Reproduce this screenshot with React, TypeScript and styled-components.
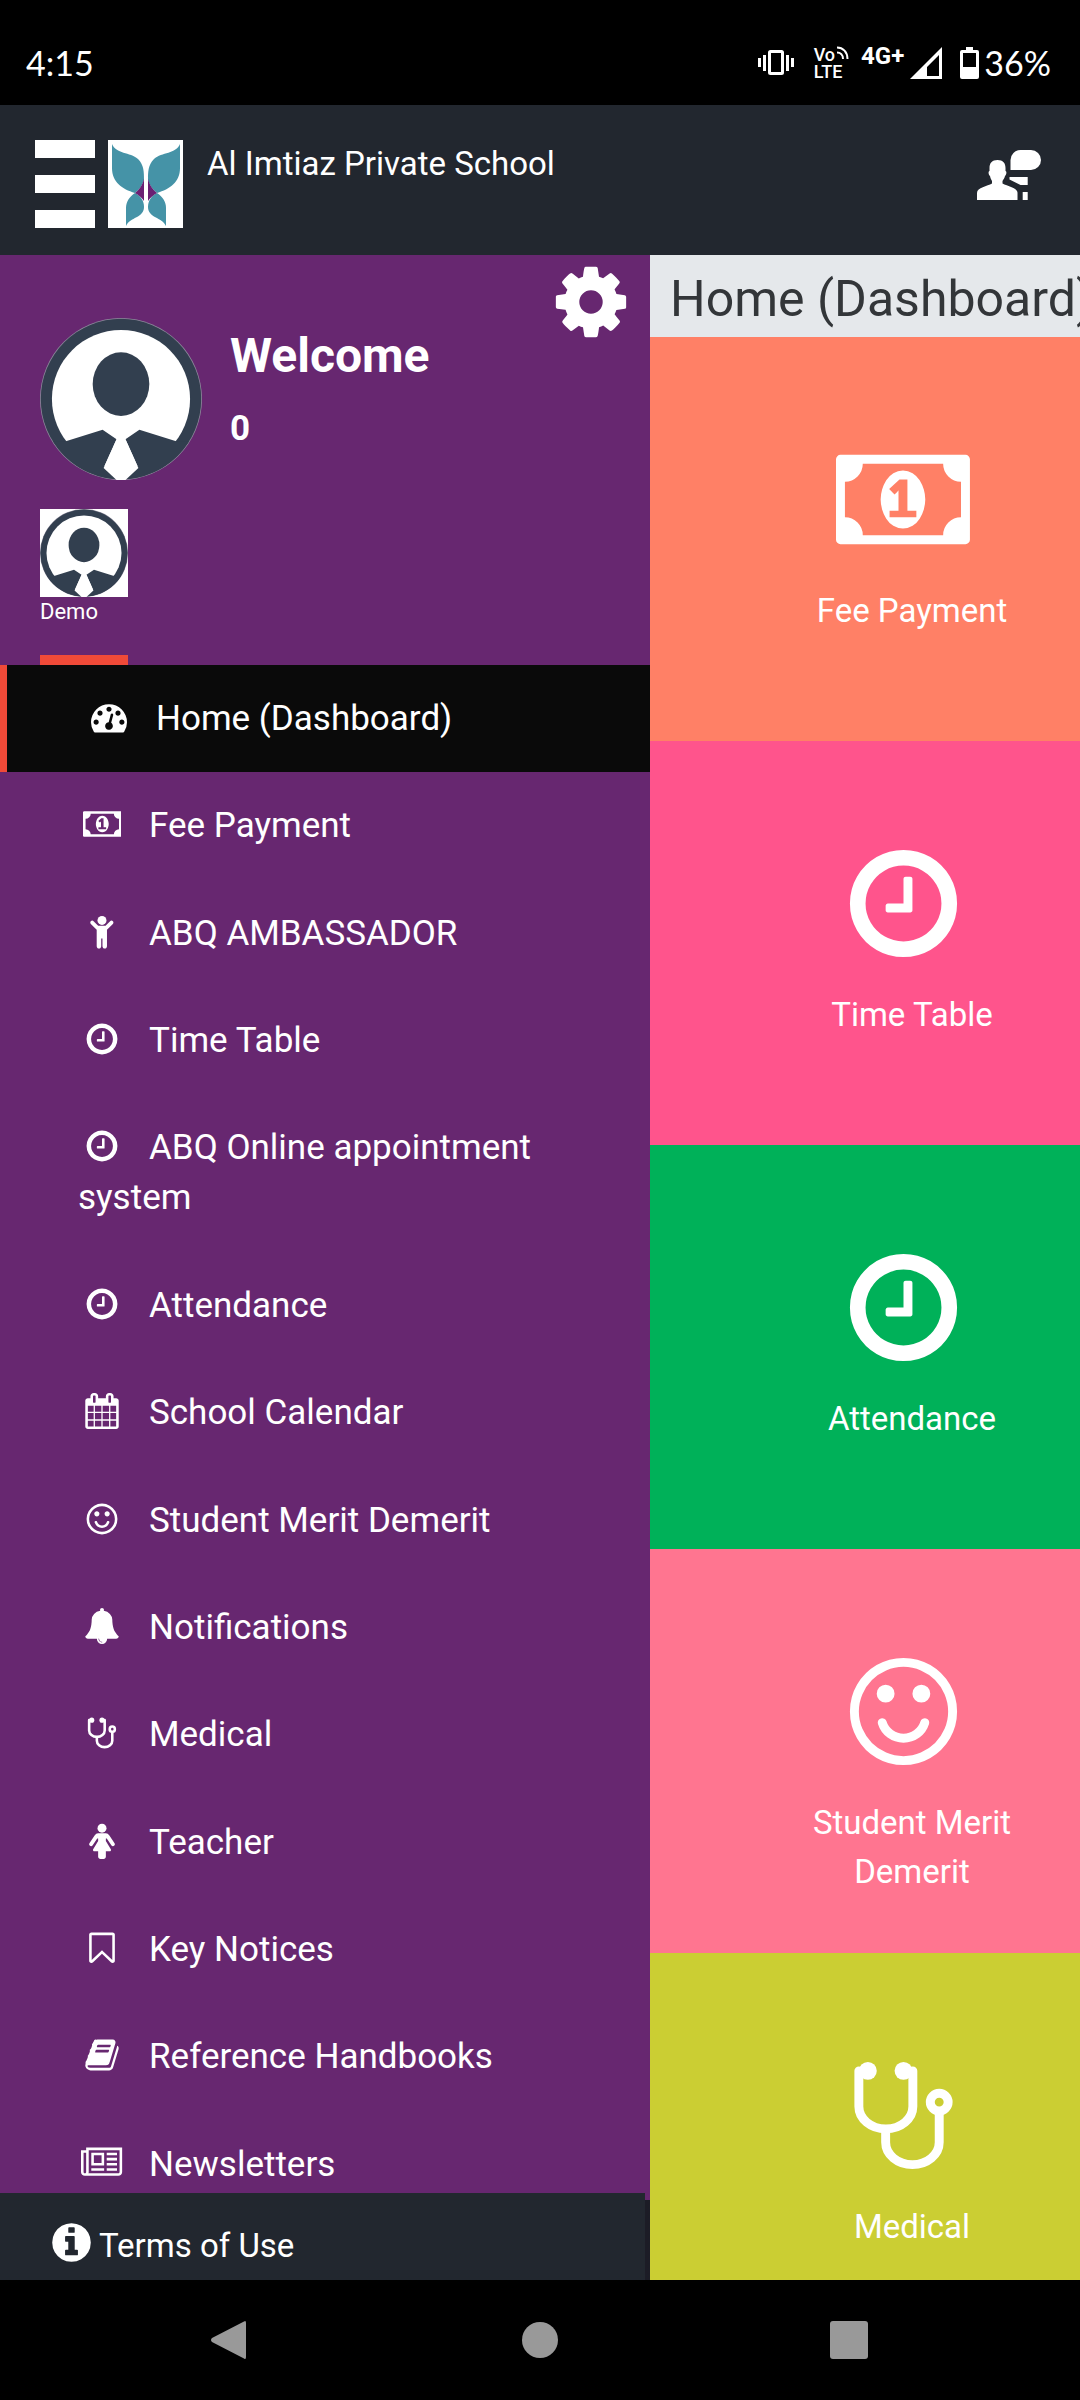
import type { ReactNode } from "react";
import styled, { createGlobalStyle } from "styled-components";

const GlobalStyle = createGlobalStyle`
  * {
    box-sizing: border-box;
  }

  body {
    margin: 0;
    background: #000;
    color: #fff;
    font-family: Roboto, "Liberation Sans", sans-serif;
  }

  button {
    padding: 0;
    border: 0;
    background: none;
    color: inherit;
    font: inherit;
    cursor: pointer;
  }

  a {
    color: inherit;
    text-decoration: none;
  }

  svg {
    display: block;
    fill: currentColor;
  }
`;

/* ---------- icons ---------- */

type Glyph = { width?: number; shape: ReactNode };

const glyphs: Record<string, Glyph> = {
  dashboard: {
    shape: (
      <path d="M384 1152q0-53-37.5-90.5t-90.5-37.5-90.5 37.5-37.5 90.5 37.5 90.5 90.5 37.5 90.5-37.5 37.5-90.5zm192-448q0-53-37.5-90.5t-90.5-37.5-90.5 37.5-37.5 90.5 37.5 90.5 90.5 37.5 90.5-37.5 37.5-90.5zm428 481l101-382q6-26-7.5-48.5t-38.5-29.5-48 6.5-30 39.5l-101 382q-60 5-107 43.5t-63 98.5q-20 77 20 146t117 89 146-20 89-117q16-60-6-117t-72-91zm660-33q0-53-37.5-90.5t-90.5-37.5-90.5 37.5-37.5 90.5 37.5 90.5 90.5 37.5 90.5-37.5 37.5-90.5zm-640-640q0-53-37.5-90.5t-90.5-37.5-90.5 37.5-37.5 90.5 37.5 90.5 90.5 37.5 90.5-37.5 37.5-90.5zm448 192q0-53-37.5-90.5t-90.5-37.5-90.5 37.5-37.5 90.5 37.5 90.5 90.5 37.5 90.5-37.5 37.5-90.5zm320 448q0 261-141 483-19 29-54 29h-1402q-35 0-54-29-141-221-141-483 0-182 71-348t191-286 286-191 348-71 348 71 286 191 191 286 71 348z" />
    ),
  },
  money: {
    width: 1920,
    shape: (
      <path d="M768 1152h384v-96h-128v-448h-114l-148 137 77 80q42-37 55-57h2v288h-128v96zm512-256q0 70-21 142t-59.5 134-101.5 101-138 39-138-39-101.5-101-59.5-134-21-142 21-142 59.5-134 101.5-101 138-39 138 39 101.5 101 59.5 134 21 142zm512 256v-512q-106 0-181-75t-75-181h-1152q0 106-75 181t-181 75v512q106 0 181 75t75 181h1152q0-106 75-181t181-75zm128-832v1152q0 26-19 45t-45 19h-1792q-26 0-45-19t-19-45v-1152q0-26 19-45t45-19h1792q26 0 45 19t19 45z" />
    ),
  },
  child: {
    shape: (
      <>
        <path d="M1436 356q28 28 28 68t-28 68l-292 292v824q0 46-33 79t-79 33-79-33-33-79v-384h-64v384q0 46-33 79t-79 33-79-33-33-79v-824l-292-292q-28-28-28-68t28-68q29-28 68.500-28t67.500 28l228 228h368l228-228q28-28 68-28t68 28z" />
        <circle cx="896" cy="320" r="224" />
      </>
    ),
  },
  clock: {
    shape: (
      <path d="M1024 544v448q0 14-9 23t-23 9h-320q-14 0-23-9t-9-23v-64q0-14 9-23t23-9h224v-352q0-14 9-23t23-9h64q14 0 23 9t9 23zm416 352q0-148-73-273t-198-198-273-73-273 73-198 198-73 273 73 273 198 198 273 73 273-73 198-198 73-273zm224 0q0 209-103 385.5t-279.5 279.5-385.5 103-385.5-103-279.5-279.5-103-385.5 103-385.5 279.5-279.5 385.5-103 385.5 103 279.5 279.5 103 385.5z" />
    ),
  },
  calendar: {
    shape: (
      <path d="M192 1664h288v-288h-288v288zm352 0h320v-288h-320v288zm-352-352h288v-320h-288v320zm352 0h320v-320h-320v320zm-352-384h288v-288h-288v288zm736 736h320v-288h-320v288zm-384-736h320v-288h-320v288zm768 736h288v-288h-288v288zm-384-352h320v-320h-320v320zm-352-864v-288q0-13-9.500-22.500t-22.500-9.500h-64q-13 0-22.500 9.500t-9.500 22.500v288q0 13 9.500 22.500t22.500 9.500h64q13 0 22.500-9.500t9.500-22.500zm736 864h288v-320h-288v320zm-384-384h320v-288h-320v288zm384 0h288v-288h-288v288zm32-480v-288q0-13-9.500-22.500t-22.500-9.500h-64q-13 0-22.500 9.500t-9.500 22.500v288q0 13 9.500 22.500t22.500 9.500h64q13 0 22.500-9.500t9.500-22.500zm384-64v1280q0 52-38 90t-90 38h-1408q-52 0-90-38t-38-90v-1280q0-52 38-90t90-38h128v-96q0-66 47-113t113-47h64q66 0 113 47t47 113v96h384v-96q0-66 47-113t113-47h64q66 0 113 47t47 113v96h128q52 0 90 38t38 90z" />
    ),
  },
  smile: {
    shape: (
      <path d="M1262 1075q-37 121-138 195t-228 74-228-74-138-195q-8-25 4-48.5t38-31.5q25-8 48.5 4t31.5 38q25 80 92.5 129.5t151.5 49.5 151.5-49.5 92.5-129.5q8-26 32-38t49-4 37 31.5 4 48.5zm-494-435q0 53-37.5 90.5t-90.5 37.5-90.5-37.5-37.5-90.5 37.5-90.5 90.5-37.5 90.5 37.5 37.5 90.5zm512 0q0 53-37.5 90.5t-90.5 37.5-90.5-37.5-37.5-90.5 37.5-90.5 90.5-37.5 90.5 37.5 37.5 90.5zm256 256q0-130-51-248.5t-136.5-204-204-136.5-248.5-51-248.5 51-204 136.5-136.5 204-51 248.5 51 248.5 136.5 204 204 136.5 248.5 51 248.5-51 204-136.5 136.5-204 51-248.5zm128 0q0 209-103 385.5t-279.5 279.5-385.5 103-385.5-103-279.5-279.5-103-385.5 103-385.5 279.5-279.5 385.5-103 385.5 103 279.5 279.5 103 385.5z" />
    ),
  },
  bell: {
    shape: (
      <path d="M912 1696q0-16-16-16-59 0-101.5-42.5t-42.5-101.5q0-16-16-16t-16 16q0 73 51.5 124.5t124.5 51.5q16 0 16-16zm816-288q0 52-38 90t-90 38h-448q0 106-75 181t-181 75-181-75-75-181h-448q-52 0-90-38t-38-90q50-42 91-88t85-119.5 74.5-158.5 50-206 19.5-260q0-152 117-282.5t307-158.5q-8-19-8-39 0-40 28-68t68-28 68 28 28 68q0 20-8 39 190 28 307 158.5t117 282.5q0 139 19.5 260t50 206 74.5 158.5 85 119.5 91 88z" />
    ),
  },
  stethoscope: {
    shape: (
      <>
        <g fill="none" stroke="currentColor" strokeWidth="128">
          <path d="M256 256v512c0 177 173 320 387 320s387-143 387-320v-512" strokeLinecap="round" />
          <path d="M640 1088v192c0 177 172 320 384 320s384-143 384-320v-448" />
          <circle cx="1408" cy="704" r="128" />
        </g>
        <circle cx="385" cy="256" r="128" />
        <circle cx="896" cy="256" r="128" />
      </>
    ),
  },
  female: {
    shape: (
      <>
        <path d="M1536 1056q0 40-28 68t-68 28q-51 0-80-43l-227-341h-45v132l247 411q9 15 9 33 0 26-19 45t-45 19h-192v272q0 46-33 79t-79 33h-160q-46 0-79-33t-33-79v-272h-192q-26 0-45-19t-19-45q0-18 9-33l247-411v-132h-45l-227 341q-29 43-80 43-40 0-68-28t-28-68q0-29 16-53l256-384q73-107 176-107h384q103 0 176 107l256 384q16 24 16 53z" />
        <circle cx="896" cy="256" r="224" />
      </>
    ),
  },
  bookmark: {
    shape: (
      <path d="M1408 256h-1024v1242l423-406 89-85 89 85 423 406v-1242zm12-128q23 0 44 9 33 13 52.5 41t19.5 62v1289q0 34-19.5 62t-52.5 41q-19 8-44 8-48 0-83-32l-441-424-441 424q-36 33-83 33-23 0-44-9-33-13-52.5-41t-19.5-62v-1289q0-34 19.5-62t52.5-41q21-9 44-9h1048z" />
    ),
  },
  book: {
    shape: (
      <path d="M1703 478q40 57 18 129l-275 906q-19 64-76.5 107.5t-122.5 43.5h-923q-77 0-148.5-53.5t-99.5-131.5q-24-67-2-127 0-4 3-27t4-37q1-8-3-21.5t-3-19.5q2-11 8-21t16.5-23.5 16.5-23.5q23-38 45-91.5t30-91.5q3-10 .5-30t-.5-28q3-11 17-28t17-23q21-36 42-92t25-90q1-9-2.5-32t.5-28q4-13 22-30.5t22-22.5q19-26 42.5-84.5t27.5-96.5q1-8-3-25.5t-2-26.5q2-8 9-18t18-23 17-21q8-12 16.5-30.5t15-35 16-36 19.5-32 26.5-23.5 36-11.5 47.5 5.5l-1 3q38-9 51-9h761q74 0 114 56t18 130l-274 906q-36 119-71.5 153.5t-128.5 34.5h-869q-27 0-38 15-11 16-1 43 24 70 144 70h923q29 0 56-15.5t35-41.5l300-987q7-22 5-57 38 15 59 43zm-1064 2q-4 13 2 22.5t20 9.5h608q13 0 25.5-9.5t16.5-22.5l21-64q4-13-2-22.5t-20-9.5h-608q-13 0-25.5 9.5t-16.5 22.5zm-83 256q-4 13 2 22.5t20 9.5h608q13 0 25.5-9.5t16.5-22.5l21-64q4-13-2-22.5t-20-9.5h-608q-13 0-25.5 9.5t-16.5 22.5z" />
    ),
  },
  newspaper: {
    width: 2048,
    shape: (
      <path d="M1024 512h-384v384h384v-384zm128 640v128h-640v-128h640zm0-768v640h-640v-640h640zm640 768v128h-512v-128h512zm0-256v128h-512v-128h512zm0-256v128h-512v-128h512zm0-256v128h-512v-128h512zm-1536 960v-960h-128v960q0 26 19 45t45 19 45-19 19-45zm1664 0v-1088h-1536v1088q0 33-11 64h1483q26 0 45-19t19-45zm128-1216v1216q0 80-56 136t-136 56h-1664q-80 0-136-56t-56-136v-1088h256v-128h1792z" />
    ),
  },
  gear: {
    shape: (
      <path d="M1152 896q0-106-75-181t-181-75-181 75-75 181 75 181 181 75 181-75 75-181zm512-109v222q0 12-8 23t-20 13l-185 28q-19 54-39 91 35 50 107 138 10 12 10 25t-9 23q-27 37-99 108t-94 71q-12 0-26-9l-138-108q-44 23-91 38-16 136-29 186-7 28-36 28h-222q-14 0-24.500-8.500t-11.500-21.500l-28-184q-49-16-90-37l-141 107q-10 9-25 9-14 0-25-11-126-114-165-168-7-10-7-23 0-12 8-23 15-21 51-66.500t54-70.500q-27-50-41-99l-183-27q-13-2-21-12.500t-8-23.500v-222q0-12 8-23t19-13l186-28q14-46 39-92-40-57-107-138-10-12-10-24 0-10 9-23 26-36 98.500-107.500t94.500-71.500q13 0 26 10l138 107q44-23 91-38 16-136 29-186 7-28 36-28h222q14 0 24.500 8.500t11.500 21.500l28 184q49 16 90 37l142-107q9-9 24-9 13 0 25 10 129 119 165 170 7 8 7 22 0 12-8 23-15 21-51 66.500t-54 70.500q26 50 41 98l183 28q13 2 21 12.500t8 23.500z" />
    ),
  },
  info: {
    shape: (
      <path d="M1152 1376v-160q0-14-9-23t-23-9h-96v-512q0-14-9-23t-23-9h-320q-14 0-23 9t-9 23v160q0 14 9 23t23 9h96v320h-96q-14 0-23 9t-9 23v160q0 14 9 23t23 9h448q14 0 23-9t9-23zm-128-896v-160q0-14-9-23t-23-9h-192q-14 0-23 9t-9 23v160q0 14 9 23t23 9h192q14 0 23-9t9-23zm640 416q0 209-103 385.5t-279.5 279.5-385.5 103-385.5-103-279.5-279.5-103-385.5 103-385.5 279.5-279.5 385.5-103 385.5 103 279.5 279.5 103 385.5z" />
    ),
  },
};

const GlyphSvg = styled.svg<{ $size: number }>`
  height: ${({ $size }) => $size}px;
  width: auto;
  flex: none;
`;

function Icon({ name, size }: { name: string; size: number }) {
  const { width = 1792, shape } = glyphs[name];
  return (
    <GlyphSvg $size={size} viewBox={`0 0 ${width} 1792`} aria-hidden="true">
      {shape}
    </GlyphSvg>
  );
}

function Avatar({ size }: { size: number }) {
  return (
    <svg width={size} height={size} viewBox="0 0 163 163" aria-hidden="true">
      <circle cx="81.5" cy="81.5" r="81.5" fill="#8d8a9b" />
      <circle cx="81.5" cy="81.5" r="80.7" fill="#323f4f" />
      <circle cx="81.5" cy="81.5" r="69.5" fill="#fff" />
      <ellipse cx="81.5" cy="66.500" rx="28.500" ry="32" fill="#323f4f" />
      <path
        d="M26 124L63 112.500L77 122L64 151L76 162A80.700 80.700 0 0 1 13 124ZM137 124L100 112.500L86 122L99 151L87 162A80.700 80.700 0 0 0 150 124Z"
        fill="#323f4f"
      />
      <path d="M77 122H86L99 151L86 163H77L64 151Z" fill="#fff" />
    </svg>
  );
}

function Wing() {
  return (
    <>
      <path
        d="M4 4C8 14 22 12 30 19C36 25 36 32 36 40C34 46 31 50 27 53C14 49 4 42 4 28ZM27 53C33 56 36 61 36 67C36 78 22 77 18 86V68C18 62 21 57 27 53Z"
        fill="#4593a7"
      />
      <path d="M36 39C34 46 31 50 27 53C31 55 34 58 36 61Z" fill="#6a1f73" />
    </>
  );
}

/* ---------- system bars ---------- */

const Shell = styled.div`
  display: flex;
  flex-direction: column;
  height: 100vh;
  overflow: hidden;
`;

const StatusBar = styled.div`
  display: flex;
  flex: none;
  align-items: center;
  justify-content: space-between;
  height: 105px;
  padding: 21px 29px 0 26px;
  font-family: Lato, sans-serif;
  font-size: 34px;
  line-height: 40px;
`;

const StatusIcons = styled.div`
  display: flex;
  align-items: center;
`;

const Volte = styled.div`
  display: flex;
  flex-direction: column;
  margin: 0 12px 0 20px;
  font-family: Roboto, sans-serif;
  font-size: 18px;
  font-weight: 500;
  line-height: 17px;

  span {
    display: flex;
  }
`;

const NetworkType = styled.span`
  align-self: flex-start;
  margin-right: 6px;
  font-family: Roboto, sans-serif;
  font-size: 24px;
  font-weight: 700;
  line-height: 26px;
`;

const Battery = styled.span`
  display: flex;
  align-items: center;
  gap: 5px;
  margin-left: 18px;
`;

const NavBar = styled.div`
  display: grid;
  flex: none;
  grid-template-columns: repeat(3, 1fr);
  place-items: center;
  height: 120px;
  padding: 0 76px;
  color: #999;
`;

/* ---------- header ---------- */

const Header = styled.header`
  display: flex;
  flex: none;
  align-items: flex-start;
  height: 150px;
  padding: 35px 39px 0 35px;
  background: #22272f;
`;

const MenuButton = styled.button`
  display: flex;
  flex-direction: column;
  justify-content: space-between;
  width: 60px;
  height: 88px;

  span {
    height: 18px;
    background: #fff;
  }
`;

const Logo = styled.svg`
  margin: 0 24px 0 13px;
  background: #fff;
`;

const SchoolName = styled.h1`
  flex: 1;
  margin: 4px 0 0;
  font-size: 33px;
  font-weight: 400;
  line-height: 40px;
`;

const ChatButton = styled.button`
  margin-top: 10px;
`;

/* ---------- drawer ---------- */

const Body = styled.div`
  display: grid;
  flex: 1;
  grid-template-columns: 65fr 43fr;
  min-height: 0;
`;

const Drawer = styled.aside`
  position: relative;
  display: flex;
  flex-direction: column;
  min-width: 0;
  overflow: hidden;
  background: #672770;
`;

const Profile = styled.div`
  display: flex;
  padding: 12px 24px 0 40px;
`;

const ProfileImage = styled.div`
  margin: 51px 28px 0 0;
`;

const ProfileText = styled.div`
  flex: 1;
  padding-top: 61px;
  font-weight: 700;

  h2 {
    margin: 0 0 20px;
    font-size: 48px;
    line-height: 56px;
  }

  p {
    margin: 0;
    font-size: 35px;
    line-height: 50px;
  }
`;

const SettingsButton = styled.button`
  align-self: flex-start;
  margin: -6px;
`;

const Student = styled.button`
  display: flex;
  flex-direction: column;
  align-self: flex-start;
  width: 88px;
  height: 156px;
  margin: 29px 0 0 40px;
  border-bottom: 10px solid #f04a38;
  font-size: 22px;
  line-height: 30px;
  text-align: left;

  svg {
    background: #fff;
  }
`;

const MenuList = styled.ul`
  display: flex;
  flex: 1;
  flex-direction: column;
  margin: 0;
  padding: 0 0 62px;
  list-style: none;
`;

const MenuItem = styled.li`
  display: grid;
  flex: 1 0 auto;
`;

const MenuLink = styled.a<{ $active?: boolean }>`
  padding: 29px 60px 28px 78px;
  border-left: ${({ $active }) => ($active ? "7px solid #f04a38" : "0")};
  background: ${({ $active }) => ($active ? "#0a0a0a" : "transparent")};
  font-size: 35px;
  line-height: 50px;
`;

const MenuIcon = styled.span`
  display: inline-flex;
  justify-content: center;
  width: 48px;
  margin-right: 23px;
  vertical-align: -5px;
`;

const DrawerFooter = styled.div`
  position: absolute;
  right: 0;
  bottom: 0;
  left: 0;
  display: flex;
  align-items: flex-end;
  height: 80px;
  padding-right: 5px;
  background: #1c1c26;
`;

const TermsLink = styled.a`
  display: flex;
  flex: 1;
  align-items: center;
  gap: 5px;
  height: 87px;
  padding: 12px 49px 0;
  background: #22272f;
  font-size: 33px;
  line-height: 40px;

  span {
    padding-top: 6px;
  }
`;

/* ---------- dashboard ---------- */

const Dashboard = styled.main`
  min-width: 0;
  overflow: hidden;
`;

const PageTitle = styled.h2`
  margin: 0;
  padding: 14px 0 8px 20px;
  overflow: hidden;
  background: #e5e8eb;
  color: #333639;
  font-size: 50px;
  font-weight: 400;
  line-height: 60px;
  white-space: nowrap;
`;

const Tile = styled.a<{ $color: string }>`
  display: flex;
  flex-direction: column;
  align-items: center;
  gap: 24px;
  height: 404px;
  padding: 100px 40px 0 134px;
  background: ${({ $color }) => $color};
  font-size: 33px;
  line-height: 49px;
  text-align: center;
`;

const TileIcon = styled.span`
  margin-right: 18px;
`;

const menu = [
  { icon: "dashboard", label: "Home (Dashboard)", active: true },
  { icon: "money", label: "Fee Payment" },
  { icon: "child", label: "ABQ AMBASSADOR" },
  { icon: "clock", label: "Time Table" },
  { icon: "clock", label: "ABQ Online appointment system" },
  { icon: "clock", label: "Attendance" },
  { icon: "calendar", label: "School Calendar" },
  { icon: "smile", label: "Student Merit Demerit" },
  { icon: "bell", label: "Notifications" },
  { icon: "stethoscope", label: "Medical" },
  { icon: "female", label: "Teacher" },
  { icon: "bookmark", label: "Key Notices" },
  { icon: "book", label: "Reference Handbooks" },
  { icon: "newspaper", label: "Newsletters" },
];

const tiles = [
  { icon: "money", label: "Fee Payment", color: "#ff8066" },
  { icon: "clock", label: "Time Table", color: "#ff548c" },
  { icon: "clock", label: "Attendance", color: "#00b159" },
  { icon: "smile", label: "Student Merit Demerit", color: "#ff7590" },
  { icon: "stethoscope", label: "Medical", color: "#cbce33" },
];

export default function App() {
  return (
    <Shell>
      <GlobalStyle />
      <StatusBar>
        <span>4:15</span>
        <StatusIcons>
          <svg width="36" height="26" viewBox="0 0 36 26" aria-hidden="true">
            <path d="M0 8h3v9H0zM5 5h3v16H5zM28 5h3v16h-3zM33 8h3v9h-3z" />
            <rect x="11.500" y="1.500" width="13" height="22" rx="1" fill="none" stroke="currentColor" strokeWidth="3" />
          </svg>
          <Volte>
            <span>
              Vo
              <svg width="14" height="14" viewBox="0 0 14 14" aria-hidden="true">
                <path
                  d="M2 1.500C8 1.500 12.500 6 12.500 13M2 6.500C5.500 6.500 8 9 8 13"
                  fill="none"
                  stroke="currentColor"
                  strokeWidth="2"
                />
              </svg>
            </span>
            <span>LTE</span>
          </Volte>
          <NetworkType>4G+</NetworkType>
          <svg width="32" height="32" viewBox="0 0 32 32" aria-hidden="true">
            <path fillRule="evenodd" d="M32 0V32H0ZM29 8L17 20V29H29Z" />
          </svg>
          <Battery>
            <svg width="19" height="32" viewBox="0 0 19 32" aria-hidden="true">
              <path
                fillRule="evenodd"
                d="M6 0H13V3H17Q19 3 19 5V30Q19 32 17 32H2Q0 32 0 30V5Q0 3 2 3H6ZM3 6V20H16V6Z"
              />
            </svg>
            36%
          </Battery>
        </StatusIcons>
      </StatusBar>

      <Header>
        <MenuButton aria-label="Toggle menu">
          <span />
          <span />
          <span />
        </MenuButton>
        <Logo width="75" height="88" viewBox="0 0 75 88" aria-hidden="true">
          <Wing />
          <g transform="translate(76 0) scale(-1 1)">
            <Wing />
          </g>
        </Logo>
        <SchoolName>Al Imtiaz Private School</SchoolName>
        <ChatButton aria-label="Messages">
          <svg width="64" height="50" viewBox="0 0 64 50" aria-hidden="true">
            <path d="M20.500 10C26 10 28.500 13 28.500 18V21C30 21 29.500 25 28 26C27.500 28 26.500 29.500 25.500 31V33.500C30 36 40.500 37.500 40.500 43V50H0V43C0 37.500 10.500 36 15 33.500V31C14 29.500 13.500 28 13 26C11.500 25 11 21 12.500 21V18C12.500 13 15 10 20.500 10Z" />
            <path d="M43.500 0H54A10 10 0 0 1 54 20H33.500V10A10 10 0 0 1 43.500 0Z" />
            <path d="M32.500 27H50.700V35H43.500L32.500 29.500ZM45.700 42H50.700V50H45.700Z" />
          </svg>
        </ChatButton>
      </Header>

      <Body>
        <Drawer>
          <Profile>
            <ProfileImage>
              <Avatar size={162} />
            </ProfileImage>
            <ProfileText>
              <h2>Welcome</h2>
              <p>0</p>
            </ProfileText>
            <SettingsButton aria-label="Settings">
              <Icon name="gear" size={82} />
            </SettingsButton>
          </Profile>
          <Student>
            <Avatar size={88} />
            Demo
          </Student>
          <MenuList>
            {menu.map(({ icon, label, active }) => (
              <MenuItem key={label}>
                <MenuLink href="#" $active={active}>
                  <MenuIcon>
                    <Icon name={icon} size={36} />
                  </MenuIcon>
                  {label}
                </MenuLink>
              </MenuItem>
            ))}
          </MenuList>
          <DrawerFooter>
            <TermsLink href="#">
              <Icon name="info" size={45} />
              <span>Terms of Use</span>
            </TermsLink>
          </DrawerFooter>
        </Drawer>

        <Dashboard>
          <PageTitle>Home (Dashboard)</PageTitle>
          {tiles.map(({ icon, label, color }) => (
            <Tile key={label} href="#" $color={color}>
              <TileIcon>
                <Icon name={icon} size={125} />
              </TileIcon>
              {label}
            </Tile>
          ))}
        </Dashboard>
      </Body>

      <NavBar>
        <button aria-label="Back">
          <svg width="40" height="40" viewBox="0 0 40 40" aria-hidden="true">
            <path d="M33 1.500Q35 0 35 3V37Q35 40 33 38.500L1 22Q-1 20 1 18Z" />
          </svg>
        </button>
        <button aria-label="Home">
          <svg width="36" height="36" viewBox="0 0 36 36" aria-hidden="true">
            <circle cx="18" cy="18" r="18" />
          </svg>
        </button>
        <button aria-label="Recent apps">
          <svg width="38" height="38" viewBox="0 0 38 38" aria-hidden="true">
            <rect width="38" height="38" rx="3" />
          </svg>
        </button>
      </NavBar>
    </Shell>
  );
}
